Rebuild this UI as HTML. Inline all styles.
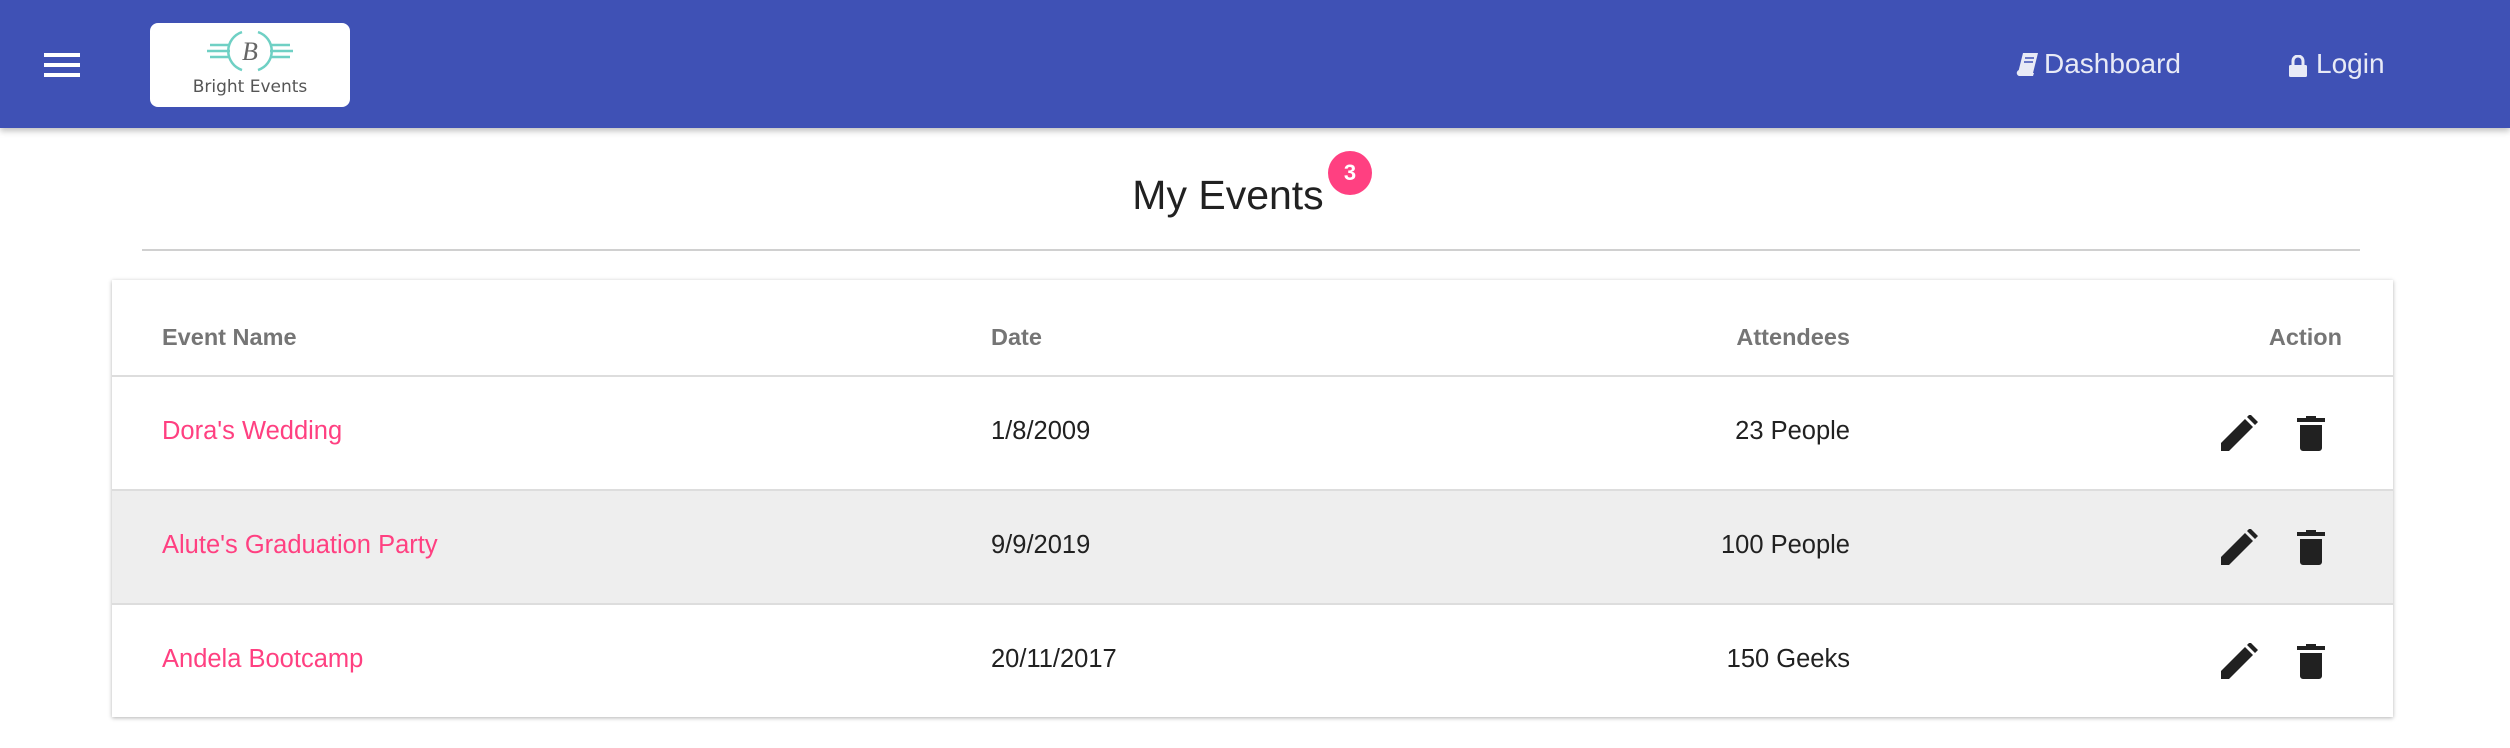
<!DOCTYPE html>
<html><head><meta charset="utf-8"><style>
*{margin:0;padding:0;box-sizing:border-box}
body{width:2510px;height:748px;background:#fff;font-family:"Liberation Sans",Arial,sans-serif;position:relative;overflow:hidden}
.nav{position:absolute;left:0;top:0;width:2510px;height:128px;background:#3f51b5;box-shadow:0 3px 6px rgba(0,0,0,.25)}
.ham{position:absolute;left:44px;width:36px;height:4px;background:#fff}
.logo{position:absolute;left:150px;top:23px;width:200px;height:84px;background:#fff;border-radius:8px}
.nl{position:absolute;color:#e8eaf6;font-size:28px;top:48px}
.title{position:absolute;left:0;width:2456px;text-align:center;top:172px;font-size:41px;color:#212121}
.badge{position:absolute;left:1328px;top:151px;width:44px;height:44px;border-radius:50%;background:#ff4081;color:#fff;font-weight:bold;font-size:22px;text-align:center;line-height:44px}
.hr{position:absolute;left:142px;top:249px;width:2218px;height:2px;background:#d0d0d0}
.card{position:absolute;left:112px;top:280px;width:2281px;height:437px;background:#fff;box-shadow:0 1px 4px rgba(0,0,0,.3)}
.row{position:absolute;left:0;width:2281px;border-top:2px solid #ddd}
.t{position:absolute;font-size:25.5px;color:#212121}
.h{position:absolute;font-size:23.5px;color:#757575;font-weight:bold;top:44px}
.pk{color:#ff4081}
</style></head><body>
<div class="nav">
<div class="ham" style="top:53px"></div><div class="ham" style="top:63px"></div><div class="ham" style="top:73px"></div>
<div class="logo">
<svg width="200" height="84" viewBox="0 0 200 84">
<g stroke="#6fd0c4" stroke-width="2.5" fill="none">
<path d="M92 9 A20 20 0 0 0 92 47"/><path d="M108 9 A20 20 0 0 1 108 47"/>
<line x1="57" y1="28" x2="80" y2="28"/><line x1="60" y1="22" x2="80" y2="22"/><line x1="60" y1="34" x2="80" y2="34"/>
<line x1="120" y1="28" x2="143" y2="28"/><line x1="120" y1="22" x2="140" y2="22"/><line x1="120" y1="34" x2="140" y2="34"/>
</g>
<text x="100" y="37" text-anchor="middle" font-family="Liberation Serif,serif" font-style="italic" font-size="26" fill="#666">B</text>
<text x="100" y="69" text-anchor="middle" font-family="DejaVu Sans,sans-serif" font-size="17" fill="#555">Bright Events</text>
</svg></div>
<svg style="position:absolute;left:2015px;top:52px" width="24" height="26" viewBox="0 0 24 26"><path d="M8 1h15l-5 20H3z" fill="#e8eaf6"/><path d="M10 6h9M9 10h9" stroke="#3f51b5" stroke-width="1.5"/><path d="M4 18c-3 1-3 5 0 6h14l1-3H5c-1-1 0-3 1-3z" fill="#e8eaf6"/></svg>
<div class="nl" style="left:2044px">Dashboard</div>
<svg style="position:absolute;left:2288px;top:55px" width="20" height="22" viewBox="0 0 20 22"><path d="M5 10V6a5 5 0 0 1 10 0v4" stroke="#e8eaf6" stroke-width="3" fill="none"/><rect x="1" y="10" width="18" height="12" rx="1.5" fill="#e8eaf6"/></svg>
<div class="nl" style="left:2316px">Login</div>
</div>
<div class="title">My Events</div>
<div class="badge">3</div>
<div class="hr"></div>
<div class="card">
<div class="h" style="left:50px">Event Name</div>
<div class="h" style="left:879px">Date</div>
<div class="h" style="right:543px">Attendees</div>
<div class="h" style="right:51px">Action</div>
<div class="row" style="top:95px;height:115px">
<div class="t pk" style="left:50px;top:40px">Dora's Wedding</div>
<div class="t" style="left:879px;top:40px">1/8/2009</div>
<div class="t" style="right:543px;top:40px">23 People</div>
</div>
<div class="row" style="top:209px;height:115px;background:#eee">
<div class="t pk" style="left:50px;top:40px">Alute's Graduation Party</div>
<div class="t" style="left:879px;top:40px">9/9/2019</div>
<div class="t" style="right:543px;top:40px">100 People</div>
</div>
<div class="row" style="top:323px;height:114px">
<div class="t pk" style="left:50px;top:40px">Andela Bootcamp</div>
<div class="t" style="left:879px;top:40px">20/11/2017</div>
<div class="t" style="right:543px;top:40px">150 Geeks</div>
</div>
</div>
<svg width="0" height="0" style="position:absolute"><defs>
<symbol id="pen" viewBox="0 0 37 36"><path d="M0 36V28L24 4L32 12L8 36Z M26 2L29 -1L37 7L34 10Z" fill="#212121"/></symbol>
<symbol id="bin" viewBox="0 0 28 36"><path d="M0 3h28v4H0z M9 1h10v3H9z M3 10h22v23a3 3 0 0 1-3 3H6a3 3 0 0 1-3-3z" fill="#212121"/></symbol>
</defs></svg>
<svg style="position:absolute;left:2221px;top:415px" width="37" height="36"><use href="#pen"/></svg>
<svg style="position:absolute;left:2297px;top:415px" width="28" height="36"><use href="#bin"/></svg>
<svg style="position:absolute;left:2221px;top:529px" width="37" height="36"><use href="#pen"/></svg>
<svg style="position:absolute;left:2297px;top:529px" width="28" height="36"><use href="#bin"/></svg>
<svg style="position:absolute;left:2221px;top:643px" width="37" height="36"><use href="#pen"/></svg>
<svg style="position:absolute;left:2297px;top:643px" width="28" height="36"><use href="#bin"/></svg>
</body></html>
